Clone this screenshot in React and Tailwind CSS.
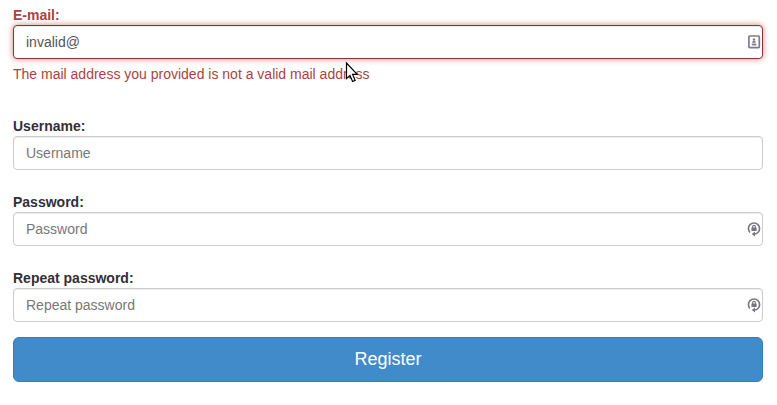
import React from "react";

function ContactIcon() {
  return (
    <svg className="h-[14px] w-[14px]" viewBox="0 0 14 14" fill="none" aria-hidden="true">
      <rect x="1.9" y="1" width="10.4" height="11.6" rx="0.8" stroke="#7f7c8a" strokeWidth="1.7" />
      <circle cx="7" cy="4.5" r="1.2" fill="#7f7c8a" />
      <path d="M5.2 7.7C5.2 6.3 6 5.8 7 5.8s1.8.5 1.8 1.9z" fill="#7f7c8a" />
      <path d="M4.8 9.5h4.6" stroke="#7f7c8a" strokeWidth="1.8" />
    </svg>
  );
}

function PasswordIcon() {
  return (
    <svg className="h-4 w-[14px]" viewBox="0 0 14 16" fill="none" aria-hidden="true">
      <path d="M3 11.5A5.6 5.6 0 1 1 11 11.5Q9.6 12.9 7.2 13.1" stroke="#77757d" strokeWidth="1.6" />
      <path d="M8 10.4v5.2L4.8 13z" fill="#77757d" />
      <path d="M5.6 7V5.8a1.4 1.4 0 0 1 2.8 0V7" stroke="#77757d" strokeWidth="1.1" />
      <rect x="4.4" y="6.4" width="5.2" height="3.6" rx="0.4" fill="#77757d" />
    </svg>
  );
}

function Field({ label, value, placeholder, error, icon }) {
  return (
    <div>
      <label className={`block font-bold ${error ? "text-[#a94442]" : "text-[#312f38]"}`}>{label}</label>
      <div
        className={`flex h-[34px] items-center justify-between rounded-[4px] border bg-white pl-3 pr-px ${
          error
            ? "border-[#843534] shadow-[inset_0_1px_1px_rgba(0,0,0,0.075),0_0_6px_#ce8483]"
            : "border-[#cccccc] shadow-[inset_0_1px_1px_rgba(0,0,0,0.075)]"
        }`}
      >
        <input
          className="h-5 min-w-0 flex-1 bg-transparent leading-5 text-[#555555] outline-none placeholder:text-[#777777]"
          aria-label={label}
          defaultValue={value}
          placeholder={placeholder}
        />
        {icon}
      </div>
      {error && <p className="mt-[5px] text-[#a94442]">{error}</p>}
    </div>
  );
}

export default function App() {
  return (
    <main className="relative h-[405px] w-[777px] overflow-hidden bg-white pl-[13px] pr-[14px] pt-[5px] font-['Liberation_Sans',Arial,sans-serif] text-[14px] leading-5">
      <form onSubmit={(event) => event.preventDefault()}>
        <Field
          label="E-mail:"
          value="invalid@"
          error="The mail address you provided is not a valid mail address"
          icon={<ContactIcon />}
        />
        <div className="mt-8 flex flex-col gap-[22px]">
          <Field label="Username:" placeholder="Username" />
          <Field label="Password:" placeholder="Password" icon={<PasswordIcon />} />
          <Field label="Repeat password:" placeholder="Repeat password" icon={<PasswordIcon />} />
        </div>
        <button className="mt-[15px] block h-[45px] w-full rounded-[6px] border border-[#357ebd] bg-[#428bca] pb-[2px] text-[18px] leading-6 text-white">
          Register
        </button>
      </form>
      <svg className="absolute left-[345px] top-[61px] h-[22px] w-[14px]" viewBox="0 0 14 22" aria-hidden="true">
        <path
          d="M1.5 2v15.6l3.5-3.2 2.6 6.1 2.6-1.1-2.6-6h4.6z"
          fill="white"
          stroke="black"
          strokeWidth="1.2"
        />
      </svg>
    </main>
  );
}
